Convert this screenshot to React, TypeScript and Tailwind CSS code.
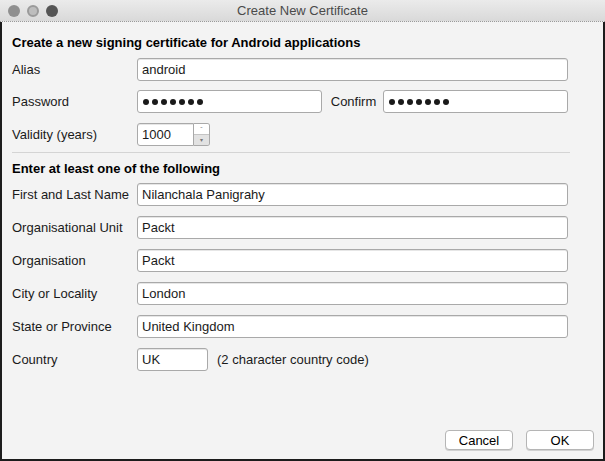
import React from 'react'

const font = { fontFamily: '"Liberation Sans", Arial, sans-serif' }

function Field({ value, className = '' }: { value: string; className?: string }) {
  return (
    <div
      className={`h-[23px] rounded-[3px] border border-[#a9a9a9] bg-white px-[4px] flex items-center text-[13px] text-[#1a1a1a] shadow-[inset_0_1px_0_#e6e6e6] ${className}`}
    >
      {value}
    </div>
  )
}

function Dots() {
  return (
    <div className="h-[23px] rounded-[3px] border border-[#a9a9a9] bg-white px-[5px] flex items-center gap-[3px] flex-1">
      {Array.from({ length: 7 }).map((_, i) => (
        <span key={i} className="w-[6px] h-[6px] rounded-full bg-[#1a1a1a]" />
      ))}
    </div>
  )
}

function Row({ label, children, mt }: { label: string; children: React.ReactNode; mt: string }) {
  return (
    <div className={`flex items-center h-[23px] ${mt}`}>
      <div className="w-[125px] pt-px text-[13px] text-[#1a1a1a]">{label}</div>
      {children}
    </div>
  )
}

export default function App() {
  return (
    <div className="w-[605px] h-[461px] flex flex-col bg-[#f3f3f3]" style={font}>
      {/* Title bar */}
      <div className="h-[22px] relative flex items-center justify-center bg-gradient-to-b from-[#ebebeb] to-[#d9d9d9] border-b border-dotted border-[#9a9a9a]">
        <div className="absolute left-[8px] top-[5px] flex gap-[7px]">
          <span className="w-[12px] h-[12px] rounded-full bg-[#8f8f8f]" />
          <span className="w-[12px] h-[12px] rounded-full bg-[#bdbdbd] border-2 border-[#9a9a9a]" />
          <span className="w-[12px] h-[12px] rounded-full bg-[#555555]" />
        </div>
        <span className="text-[13px] text-[#4a4a4a]">Create New Certificate</span>
      </div>

      {/* Body */}
      <div className="flex-1 flex flex-col border-l-2 border-r-2 border-b-2 border-[#1c1c1c] pl-[10px] pr-[35px]">
        <div className="mt-[13px] h-[16px] leading-[16px] text-[13px] font-bold text-black">
          Create a new signing certificate for Android applications
        </div>

        <Row label="Alias" mt="mt-[7px]">
          <Field value="android" className="flex-1" />
        </Row>

        <Row label="Password" mt="mt-[9px]">
          <Dots />
          <span className="ml-[9px] mr-[7px] pt-px text-[13px] text-[#1a1a1a]">Confirm</span>
          <Dots />
        </Row>

        <Row label="Validity (years)" mt="mt-[10px]">
          <div className="flex items-center">
            <Field value="1000" className="w-[57px] rounded-r-none" />
            <div className="w-[16px] h-[23px] flex flex-col rounded-r-[3px] border border-l-0 border-[#a9a9a9] overflow-hidden">
              <div className="flex-1 bg-white flex items-center justify-center text-[7px] text-[#8a8a8a] leading-none">
                ˆ
              </div>
              <div className="flex-1 bg-[#e2e2e2] border-t border-[#c4c4c4] flex items-center justify-center text-[6px] text-[#777] leading-none">
                ▾
              </div>
            </div>
          </div>
        </Row>

        <div className="mt-[6px] -mr-[2px] h-px bg-[#d4d4d4]" />

        <div className="mt-[8px] h-[16px] leading-[16px] text-[13px] font-bold text-black">
          Enter at least one of the following
        </div>

        <Row label="First and Last Name" mt="mt-[6px]">
          <Field value="Nilanchala Panigrahy" className="flex-1" />
        </Row>
        <Row label="Organisational Unit" mt="mt-[10px]">
          <Field value="Packt" className="flex-1" />
        </Row>
        <Row label="Organisation" mt="mt-[10px]">
          <Field value="Packt" className="flex-1" />
        </Row>
        <Row label="City or Locality" mt="mt-[10px]">
          <Field value="London" className="flex-1" />
        </Row>
        <Row label="State or Province" mt="mt-[10px]">
          <Field value="United Kingdom" className="flex-1" />
        </Row>
        <Row label="Country" mt="mt-[10px]">
          <Field value="UK" className="w-[71px]" />
          <span className="ml-[9px] pt-px text-[13px] text-[#1a1a1a]">(2 character country code)</span>
        </Row>

        <div className="flex-1" />

        <div className="flex justify-end gap-[13px] -mr-[26px] mb-[9px]">
          <button className="w-[68px] h-[20px] rounded-[4px] border border-[#b5b5b5] bg-white text-[13px] text-black shadow-[0_1px_0_#d0d0d0]">
            Cancel
          </button>
          <button className="w-[68px] h-[20px] rounded-[4px] border border-[#b5b5b5] bg-white text-[13px] text-black shadow-[0_1px_0_#d0d0d0]">
            OK
          </button>
        </div>
      </div>
    </div>
  )
}
